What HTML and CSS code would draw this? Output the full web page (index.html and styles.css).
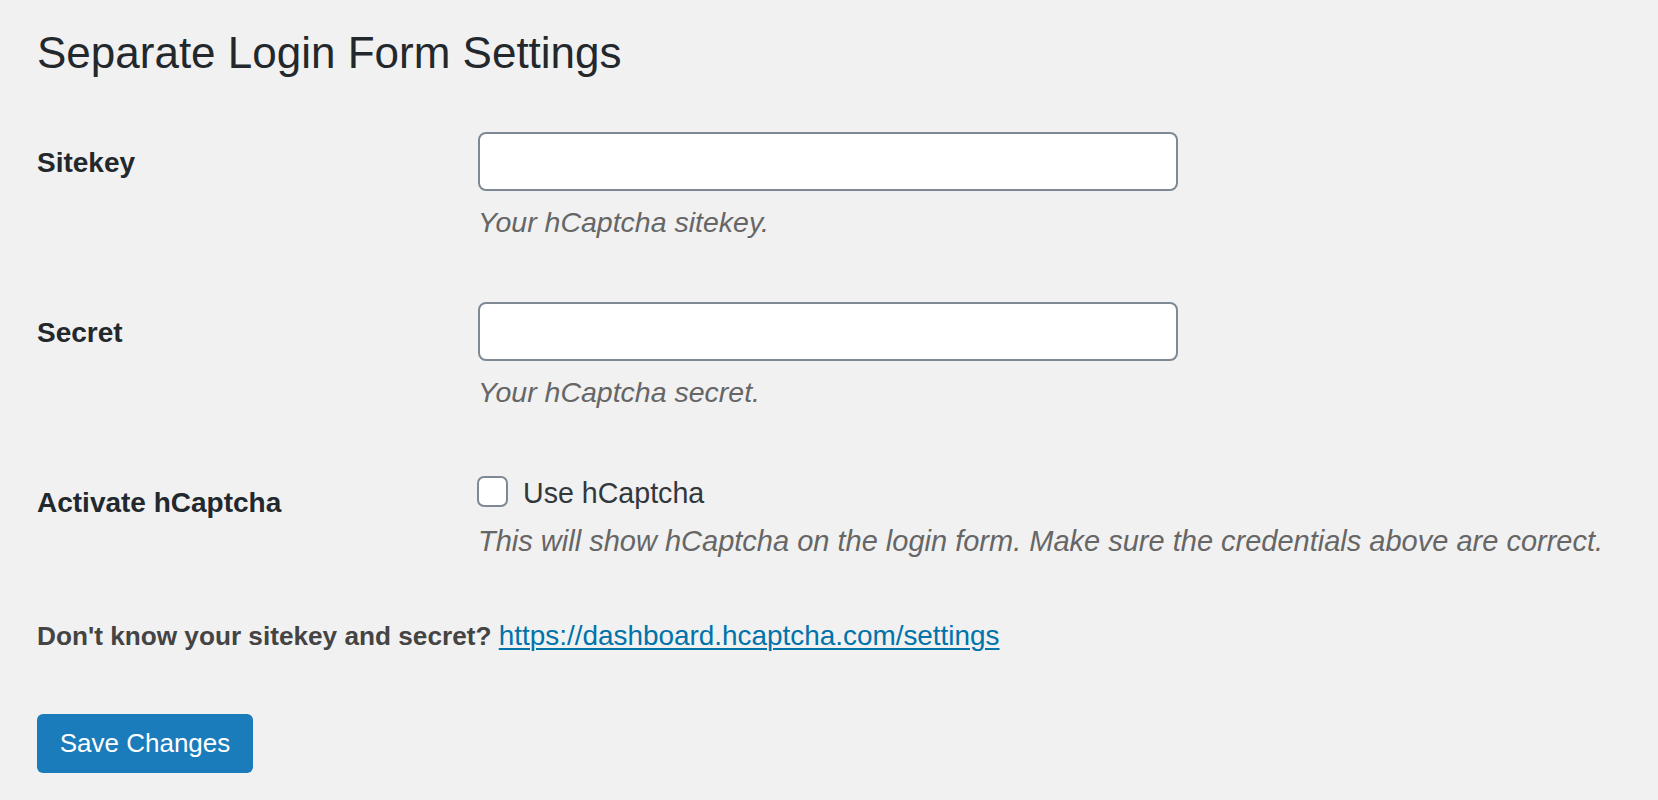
FILE: index.html
```html
<!DOCTYPE html>
<html lang="en">
<head>
<meta charset="utf-8">
<title>Separate Login Form Settings</title>
<link rel="stylesheet" href="styles.css">
</head>
<body>
<div class="wrap">
  <h1 class="page-title">Separate Login Form Settings</h1>
  <form class="settings-form">
    <div class="form-table">
      <div class="form-row">
        <div class="row-label"><label for="sitekey">Sitekey</label></div>
        <div class="row-field">
          <input type="text" id="sitekey" class="regular-text">
          <p class="description">Your hCaptcha sitekey.</p>
        </div>
      </div>
      <div class="form-row">
        <div class="row-label"><label for="secret">Secret</label></div>
        <div class="row-field">
          <input type="text" id="secret" class="regular-text">
          <p class="description">Your hCaptcha secret.</p>
        </div>
      </div>
      <div class="form-row">
        <div class="row-label"><span class="label-text">Activate hCaptcha</span></div>
        <div class="row-field">
          <label class="check-line"><input type="checkbox" class="checkbox"><span class="check-text">Use hCaptcha</span></label>
          <p class="description description-long">This will show hCaptcha on the login form. Make sure the credentials above are correct.</p>
        </div>
      </div>
    </div>
    <p class="hint">Don't know your sitekey and secret? <a class="hint-link" href="#">https://dashboard.hcaptcha.com/settings</a></p>
    <p class="submit"><button type="button" class="button-primary">Save Changes</button></p>
  </form>
</div>
</body>
</html>
```

FILE: styles.css
```css
html, body {
  margin: 0;
  padding: 0;
}

body {
  background: #f1f1f1;
  color: #444;
  font-family: "Liberation Sans", Arial, sans-serif;
  width: 1658px;
  height: 800px;
  overflow: hidden;
}

.wrap {
  padding: 27px 0 0 37px;
}

.page-title {
  margin: 0;
  font-size: 44px;
  line-height: 52px;
  font-weight: 400;
  color: #23282d;
}

.settings-form {
  margin: 0;
}

.form-table {
  display: flex;
  flex-direction: column;
  gap: 63px;
  margin-top: 53px;
}

.form-row {
  display: grid;
  grid-template-columns: 441px 1fr;
}

.row-label {
  padding-top: 14px;
  font-size: 28px;
  line-height: 34px;
  font-weight: 700;
  color: #23282d;
}

.row-field {
  display: flex;
  flex-direction: column;
  align-items: flex-start;
}

.regular-text {
  box-sizing: border-box;
  width: 700px;
  height: 59px;
  margin: 0;
  border: 2px solid #7e8993;
  border-radius: 8px;
  background: #fff;
  font-size: 26px;
  padding: 0 14px;
  outline: none;
}

.description {
  margin: 14px 0 0;
  font-size: 28.5px;
  line-height: 34px;
  font-style: italic;
  color: #666;
}

.description-long {
  margin-top: 13px;
  font-size: 29px;
}

.check-line {
  display: flex;
  align-items: center;
  height: 39px;
  gap: 15px;
  font-size: 28.6px;
  color: #32373c;
}

.checkbox {
  -webkit-appearance: none;
  appearance: none;
  box-sizing: border-box;
  width: 31px;
  height: 31px;
  margin: 0 0 0 -1px;
  border: 2px solid #7e8993;
  border-radius: 7px;
  background: #fff;
}

.check-text {
  padding-top: 2px;
  line-height: 34px;
}

.hint {
  margin: 61px 0 0;
  font-size: 26.2px;
  line-height: 34px;
  font-weight: 700;
  color: #444;
}

.hint-link {
  font-weight: 400;
  font-size: 27.9px;
  color: #0073aa;
  text-decoration: underline;
  text-decoration-thickness: 2px;
  text-underline-offset: 3px;
}

.submit {
  margin: 61px 0 0;
}

.button-primary {
  box-sizing: border-box;
  height: 59px;
  width: 216px;
  padding: 0;
  border: none;
  border-radius: 6px;
  background: #1a7cba;
  color: #fff;
  font-family: "Liberation Sans", Arial, sans-serif;
  font-size: 26px;
  cursor: pointer;
}
```
